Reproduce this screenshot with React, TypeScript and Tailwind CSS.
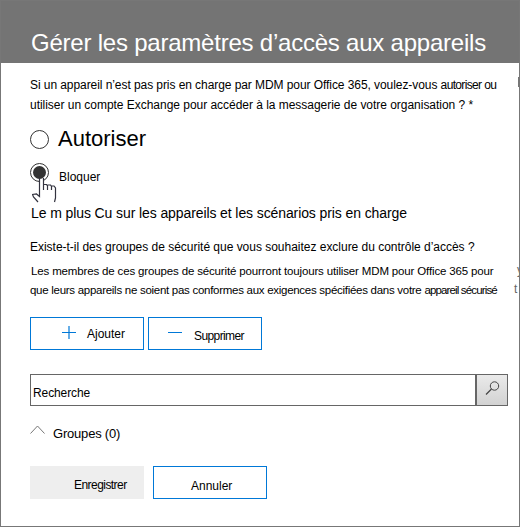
import type { ReactNode } from 'react';

function Line({ className, children }: { className: string; children: ReactNode }) {
  return <div className={`flex h-5 items-start whitespace-pre leading-5 ${className}`}>{children}</div>;
}

function Pointer() {
  return (
    <svg className="absolute left-[1px] top-[14px]" width="26" height="25" viewBox="0 0 26 25" fill="none">
      <path d="M6 24L1 18V16L5 15L7 17V1H12V6L21 7L24 9V24Z" fill="#fff" />
      <path d="M7.5 0V18.5L4.5 16L.5 16.5L1.5 19L6 24M11.5 0V12M11.5 6.5H14.5L15.5 8V12M15.5 7H18.5L19.5 8.5V12M19.5 8H22L23.5 10V20L22.5 24" stroke="#33333f" strokeWidth="1.2" />
    </svg>
  );
}

export default function App() {
  return (
    <main className="flex h-[527px] w-[520px] flex-col overflow-hidden border border-[#777] bg-white font-['Liberation_Sans',Arial,sans-serif] text-[13px] text-black">
      <header className="flex h-[62px] shrink-0 items-start bg-[#747474] pl-[30px] pt-[26px]">
        <h1 className="whitespace-nowrap text-[24px] leading-8 tracking-[-0.22px] text-white">Gérer les paramètres d’accès aux appareils</h1>
      </header>

      <div className="flex items-start justify-between pl-[29px] pt-3">
        <div>
          <Line className="text-[12px] tracking-[-0.07px]">Si un appareil n’est pas pris en charge par MDM pour Office 365, voulez-vous <span className="tracking-[-0.65px]">autoriser ou</span></Line>
          <Line className="text-[12px] tracking-[-0.03px]">utiliser un compte Exchange pour accéder à la messagerie de votre organisation ? *</Line>
        </div>
        <span className="mt-[2px] h-[10px] w-px bg-[#777]" />
      </div>

      <div className="mt-2 flex h-8 items-center pl-[29px]">
        <span className="size-[19px] rounded-full border-[1.5px] border-[#333]" />
        <span className="ml-[9px] text-[22px] leading-8">Autoriser</span>
      </div>
      <div className="mt-[8px] flex h-[30px] pl-[29px]">
        <span className="relative flex size-[19px] items-center justify-center rounded-full border-[1.5px] border-[#333]">
          <span className="size-[13px] rounded-full bg-[#333]" />
          <Pointer />
        </span>
        <span className="ml-[10px] mt-[4px] text-[12px] leading-5">Bloquer</span>
      </div>

      <Line className="mt-[10px] pl-[30px] text-[14px] tracking-[-0.1px]">Le m plus Cu sur les appareils et les scénarios pris en charge</Line>
      <Line className="mt-[14px] pl-[29px] text-[12px] tracking-[-0.02px]">Existe-t-il des groupes de sécurité que vous souhaitez exclure du contrôle d’accès ?</Line>

      <div className="mt-1 flex justify-between">
        <div className="pl-[29px]">
          <Line className="pl-px text-[11.5px] tracking-[-0.15px]">Les membres de ces groupes de sécurité pourront toujours utiliser MDM pour Office 365 pour</Line>
          <Line className="-mt-px text-[11.5px] tracking-[-0.28px]">que leurs appareils ne soient pas conformes aux exigences spécifiées dans votre <span className="tracking-[-0.85px]">appareil sécurisé</span></Line>
        </div>
        <div className="w-[5px] text-[12px] leading-[19px] text-[#666]"><div className="pl-[3px]">y</div><div>t</div></div>
      </div>

      <div className="mt-[17px] flex gap-1 pl-[29px]">
        <button className="flex h-[33px] w-[114px] border border-[#0078d7] pl-[31px] pt-[6px] text-[12px] leading-5">
          <svg className="mt-[1px]" width="14" height="14" viewBox="0 0 14 14"><path d="M0 7.5H14M7 1V14" stroke="#0078d7" strokeWidth="1.2" /></svg>
          <span className="ml-[11px]">Ajouter</span>
        </button>
        <button className="flex h-[33px] w-[114px] border border-[#0078d7] pl-[19px] pt-[8px] text-[12px] leading-5">
          <svg width="14" height="14" viewBox="0 0 14 14"><path d="M0 6.5H14" stroke="#0078d7" /></svg>
          <span className="ml-3 tracking-[-0.6px]">Supprimer</span>
        </button>
      </div>

      <div className="ml-[29px] mt-[24px] flex h-8 w-[478px] shrink-0">
        <div className="flex w-[446px] border border-[#666] pl-[2px] pt-2 text-[12px] leading-5 tracking-[-0.1px]">Recherche</div>
        <button aria-label="Rechercher" className="w-8 border border-[#666] bg-linear-to-b from-[#eaeaea] to-[#d2d2d2]">
          <svg className="ml-2 -mt-1" width="15" height="15" viewBox="0 0 15 15" fill="none" stroke="#444"><circle cx="9.5" cy="5" r="4.2" /><path d="M6.5 8L1 13.5" strokeWidth="1.3" /></svg>
        </button>
      </div>

      <div className="mt-[18px] flex h-5 items-start pl-[29px]">
        <svg className="mt-px" width="15" height="9" viewBox="0 0 15 9" fill="none" stroke="#777"><path d="M.5 8.5L7.5 1L14.5 8.5" /></svg>
        <span className="ml-2 text-[13px] leading-5 tracking-[-0.2px]">Groupes (0)</span>
      </div>

      <div className="mt-[22px] flex gap-[9px] pl-[29px]">
        <button className="flex h-[33px] w-[114px] bg-[#eee] pl-[44px] pt-[9px] text-[12px] leading-5 tracking-[-0.55px]">Enregistrer</button>
        <button className="flex h-[33px] w-[114px] border border-[#0078d7] pl-[37px] pt-[9px] text-[12px] leading-5">Annuler</button>
      </div>
    </main>
  );
}
